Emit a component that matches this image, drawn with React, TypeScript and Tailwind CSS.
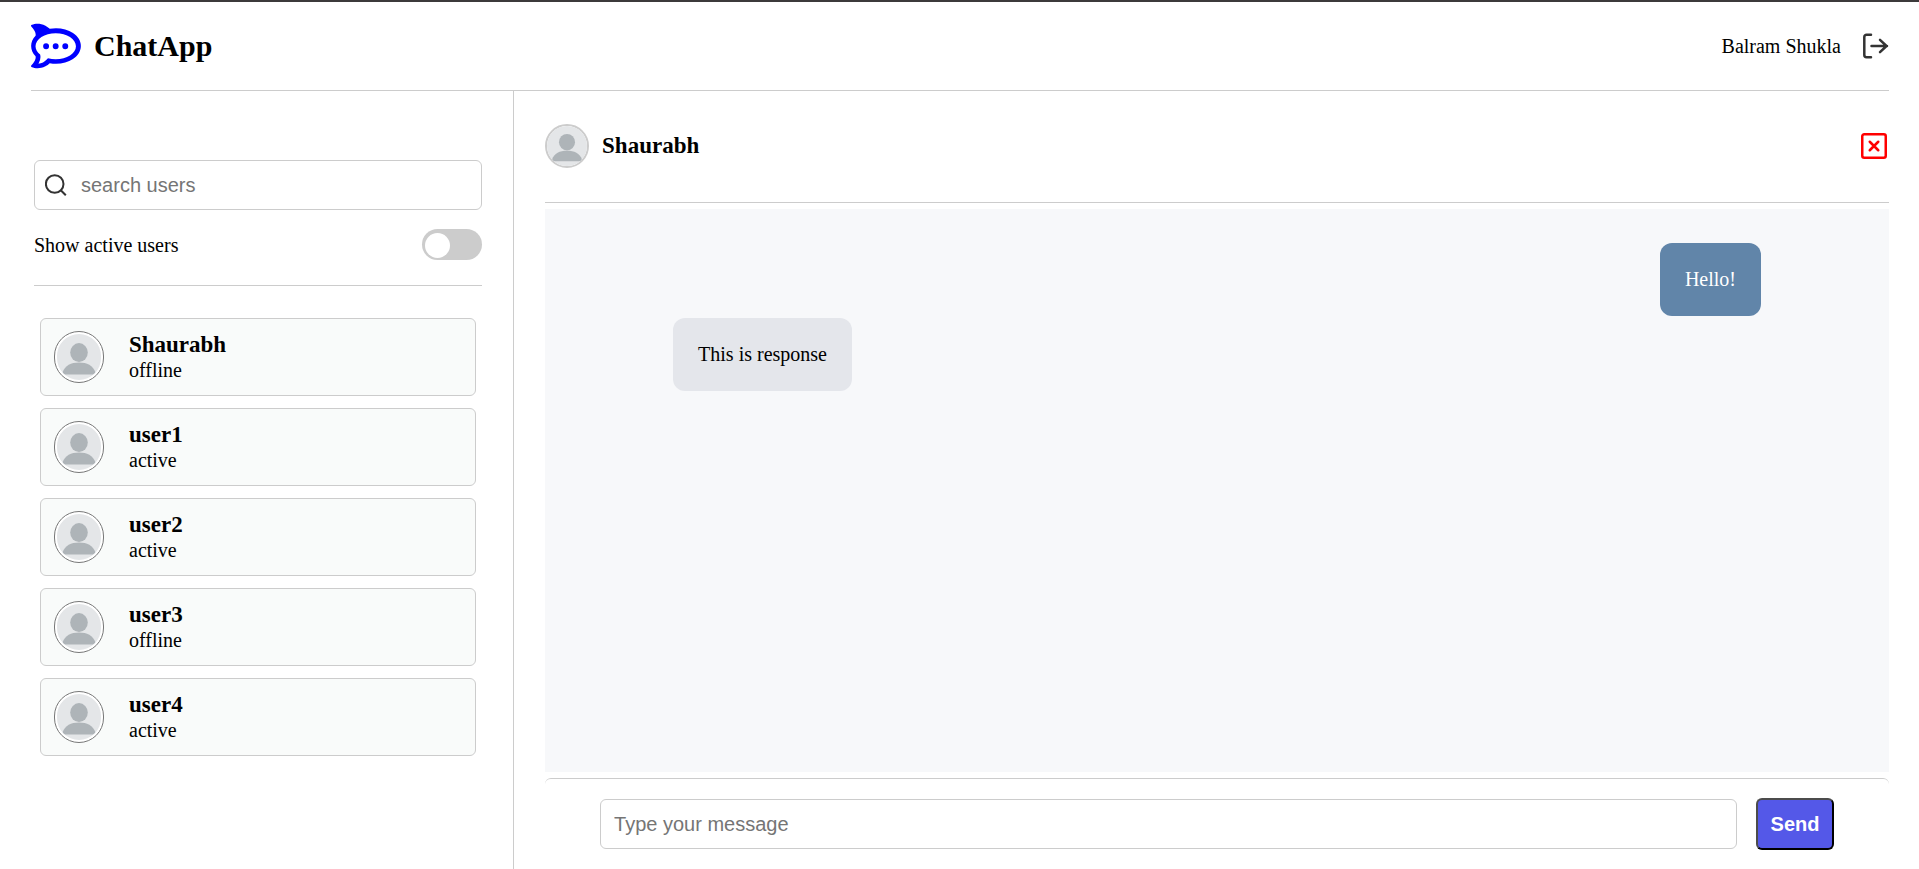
import { FaRocketchat } from "react-icons/fa";

type User = { name: string; status: "active" | "offline" };
type Message = { id: number; text: string; mine: boolean };

const users: User[] = [
  { name: "Shaurabh", status: "offline" },
  { name: "user1", status: "active" },
  { name: "user2", status: "active" },
  { name: "user3", status: "offline" },
  { name: "user4", status: "active" },
];

const messages: Message[] = [
  { id: 1, text: "Hello!", mine: true },
  { id: 2, text: "This is response", mine: false },
];

function Avatar() {
  return (
    <svg viewBox="0 0 44 44" preserveAspectRatio="none" className="size-full rounded-full bg-[#e4e6e8]" aria-hidden="true">
      <ellipse cx="22" cy="17.8" rx="8.8" ry="9.1" fill="#aeb4b8" />
      <path d="M5.5 36.8C8 30 14 27.300 22 27.300s14 2.700 16.500 9.500l-2 2h-29z" fill="#aeb4b8" />
    </svg>
  );
}

function SearchIcon() {
  return (
    <svg viewBox="0 0 22 22" className="size-[22px] shrink-0" fill="none" stroke="#333" strokeWidth="2" aria-hidden="true">
      <circle cx="9.7" cy="10" r="8.8" />
      <path d="M15.500 16 20.800 21.300" />
    </svg>
  );
}

function LogoutIcon() {
  return (
    <svg viewBox="0 0 28 28" className="size-7" fill="none" stroke="#333" strokeWidth="2.5" strokeLinecap="round" strokeLinejoin="round" aria-hidden="true">
      <path d="M10 2.800H5.500a2.200 2.200 0 0 0-2.200 2.200v18a2.200 2.200 0 0 0 2.200 2.200H10" />
      <path d="M10.500 14H26M19 7.800 25.500 14 19 20.200" />
    </svg>
  );
}

function CloseIcon() {
  return (
    <svg viewBox="0 0 28 28" className="size-7" fill="none" stroke="#f00" strokeWidth="2.5" strokeLinecap="round" aria-hidden="true">
      <rect x="1.25" y="2.25" width="23.5" height="23.5" rx="2" />
      <path d="m8.750 9.750 8.500 8.500M17.250 9.750l-8.500 8.500" />
    </svg>
  );
}

function Sidebar() {
  return (
    <aside className="w-[26%] shrink-0 border-r border-[#ccc] pt-[69px] pr-[31px] pl-[3px]">
      <label className="flex h-[50px] items-center gap-3.5 rounded-md border border-[#ccc] px-2.5">
        <SearchIcon />
        <input
          type="text"
          aria-label="search users"
          placeholder="search users"
          className="min-w-0 flex-1 font-['Liberation_Sans',Arial,sans-serif] text-xl outline-none placeholder:text-[#757575]"
        />
      </label>
      <div className="flex items-center justify-between border-b border-[#ccc] pt-[19px] pb-[25px]">
        <label htmlFor="active-only" className="text-xl leading-6">
          Show active users
        </label>
        <input
          id="active-only"
          type="checkbox"
          className="h-[31px] w-[60px] appearance-none rounded-full bg-[#ccc] px-[3px] pt-1 before:block before:size-[25px] before:rounded-full before:bg-white checked:bg-[#5458e8] checked:before:ml-auto"
        />
      </div>
      <ul className="flex flex-col gap-3 px-1.5 pt-8">
        {users.map((user) => (
          <li key={user.name}>
            <button type="button" className="flex w-full items-center gap-[25px] rounded-md border border-[#ccc] bg-[#f9fbfa] px-[13px] py-3 text-left">
              <span className="h-[52px] w-[50px] shrink-0 rounded-full border border-[#777] bg-white p-0.5">
                <Avatar />
              </span>
              <span className="flex flex-col">
                <span className="text-[23px] leading-[26px] font-bold">{user.name}</span>
                <span className="text-xl leading-6">{user.status}</span>
              </span>
            </button>
          </li>
        ))}
      </ul>
    </aside>
  );
}

function Conversation() {
  return (
    <main className="flex min-w-0 flex-1 flex-col pl-[31px]">
      <div className="flex h-28 items-center justify-between border-b border-[#ccc] pb-px">
        <div className="flex items-center gap-[13px]">
          <span className="size-11 rounded-full border-2 border-[#ccc]">
            <Avatar />
          </span>
          <h2 className="text-[23px] font-bold">Shaurabh</h2>
        </div>
        <button type="button" aria-label="Close chat">
          <CloseIcon />
        </button>
      </div>
      <ul className="mt-1.5 flex flex-1 flex-col gap-0.5 bg-[#f7f8fa] px-32 pt-[34px] text-xl">
        {messages.map((message) => (
          <li
            key={message.id}
            className={
              message.mine
                ? "self-end rounded-xl bg-[#6185a9] px-[25px] py-[22px] leading-[29px] text-white"
                : "self-start rounded-xl bg-[#e4e6eb] px-[25px] py-[22px] leading-[29px] text-black"
            }
          >
            {message.text}
          </li>
        ))}
      </ul>
      <form
        onSubmit={(event) => event.preventDefault()}
        className="mt-1.5 flex items-center gap-[19px] rounded-md border-t border-[#ccc] px-[55px] pt-[19px] pb-[19px] font-['Liberation_Sans',Arial,sans-serif] text-xl"
      >
        <input
          type="text"
          aria-label="Type your message"
          placeholder="Type your message"
          className="h-[50px] min-w-0 flex-1 rounded-md border border-[#ccc] px-[13px] outline-none placeholder:text-[#757575]"
        />
        <button
          type="submit"
          className="h-[52px] w-[78px] rounded-md border-2 border-t-[#4c4c4c] border-r-black border-b-black border-l-[#4c4c4c] bg-[#5458e8] text-center font-bold text-white"
        >
          Send
        </button>
      </form>
    </main>
  );
}

export default function App() {
  return (
    <div className="flex min-h-screen flex-col border-t-2 border-[#3c3a3b] bg-white pr-[30px] pl-[31px] font-['Liberation_Serif','Times_New_Roman',serif] text-black">
      <header className="flex h-[89px] items-center justify-between border-b border-[#ccc]">
        <a href="#" className="flex items-center gap-[13px]">
          <FaRocketchat className="size-[50px] text-[#00f]" aria-hidden="true" />
          <h1 className="text-3xl font-bold">ChatApp</h1>
        </a>
        <div className="flex items-center gap-5">
          <span className="text-xl">Balram Shukla</span>
          <button type="button" aria-label="Log out">
            <LogoutIcon />
          </button>
        </div>
      </header>
      <div className="flex flex-1">
        <Sidebar />
        <Conversation />
      </div>
    </div>
  );
}
